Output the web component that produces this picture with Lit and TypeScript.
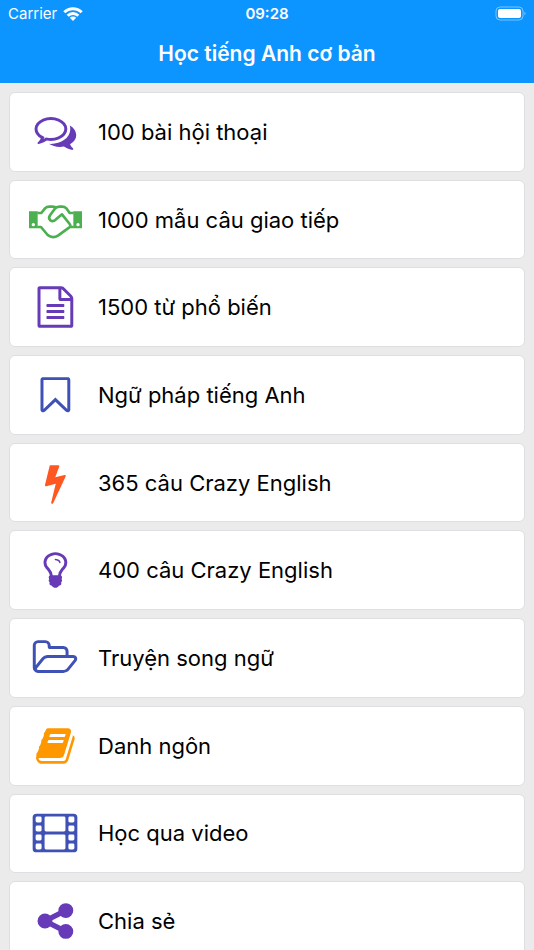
import { LitElement, html, svg, css } from "lit";
import type { SVGTemplateResult } from "lit";
import { customElement, property } from "lit/decorators.js";
import { classMap } from "lit/directives/class-map.js";

interface Icon {
  box: string;
  art: SVGTemplateResult;
}

interface Lesson {
  label: string;
  tone: string;
  icon: Icon;
}

const GLYPH_BOX = "-410 -393 2578 2578";
const WIDE_BOX = "-271 -393 2578 2578";

const glyph = (d: string, box = GLYPH_BOX): Icon => ({
  box,
  art: svg`<path fill="currentColor" d=${d}></path>`,
});

const comments = glyph(
  "M704 384q-153 0-286 52t-211.5 141-78.5 191q0 82 53 158t149 132l97 56-35 84q34-20 62-39l44-31 53 10q78 14 153 14 153 0 286-52t211.5-141 78.5-191-78.5-191-211.5-141-286-52zm0-128q191 0 353.5 68.5t256.5 186.5 94 257-94 257-256.5 186.5-353.5 68.5q-86 0-176-16-124 88-278 128-36 9-86 16h-3q-11 0-20.5-8t-11.5-21q-1-3-1-6.5t.5-6.5 2-6l2.5-5 3.5-5.5 4-5 4.5-5 4-4.5q5-6 23-25t26-29.5 22.5-29 25-38.5 20.5-44q-124-72-195-177t-71-224q0-139 94-257t256.5-186.5 353.5-68.5zm822 1169q10 24 20.5 44t25 38.5 22.5 29 26 29.5 23 25q1 1 4 4.5t4.5 5 4 5 3.5 5.5l2.5 5 2 6 .5 6.5-1 6.5q-3 14-13 22t-22 7q-50-7-86-16-154-40-278-128-90 16-176 16-271 0-472-132 58 4 88 4 161 0 309-45t264-129q125-92 192-212t67-254q0-77-23-152 129 71 204 178t75 230q0 120-71 224.5t-195 176.5z",
);

const handshake: Icon = {
  box: "15 -3 180 180",
  art: svg`
    <path fill="currentColor" fill-rule="evenodd" d="M27 61H53V112H27ZM40 96A5 5 0 1 0 40 106A5 5 0 1 0 40 96ZM160 61H186V112H160ZM174 96A5 5 0 1 0 174 106A5 5 0 1 0 174 96Z"></path>
    <path fill="none" stroke="currentColor" stroke-width="8" stroke-linejoin="round" d="M52 66H64L75 52Q80 47 88 47H98Q105 47 109 51M161 66H149L139 52Q134 47 126 47H118Q109 47 104 54L90 73Q84 82 91 88Q99 94 108 85L126 70L149 99Q154 105 147 110L115 133Q98 144 83 132L63 108H52M148 108H161"></path>`,
};

const fileText = glyph(
  "M1596 380q28 28 48 76t20 88v1152q0 40-28 68t-68 28h-1344q-40 0-68-28t-28-68v-1600q0-40 28-68t68-28h896q40 0 88 20t76 48zm-444-244v376h376q-10-29-22-41l-313-313q-12-12-41-22zm384 1528v-1024h-416q-40 0-68-28t-28-68v-416h-768v1536h1280zm-1024-864q0-14 9-23t23-9h704q14 0 23 9t9 23v64q0 14-9 23t-23 9h-704q-14 0-23-9t-9-23v-64zm736 224q14 0 23 9t9 23v64q0 14-9 23t-23 9h-704q-14 0-23-9t-9-23v-64q0-14 9-23t23-9h704zm0 256q14 0 23 9t9 23v64q0 14-9 23t-23 9h-704q-14 0-23-9t-9-23v-64q0-14 9-23t23-9h704z",
);

const bookmark = glyph(
  "M1408 256h-1024v1242l423-406 89-85 89 85 423 406v-1242zm12-128q23 0 44 9 33 13 52.5 41t19.5 62v1289q0 34-19.5 62t-52.5 41q-19 8-44 8-48 0-83-32l-441-424-441 424q-36 33-83 33-23 0-44-9-33-13-52.5-41t-19.5-62v-1289q0-34 19.5-62t52.5-41q21-9 44-9h1048z",
);

const bolt = glyph(
  "M1333 566q18 20 7 44l-540 1157q-13 25-42 25-4 0-14-2-17-5-25.5-19t-4.5-30l197-808-406 101q-4 1-12 1-18 0-31-11-18-15-13-39l201-825q4-14 16-23t28-9h328q19 0 32 12.5t13 29.5q0 8-5 18l-171 463 396-98q8-2 12-2 19 0 34 15z",
);

const bulb = glyph(
  "M1120 576q0 13-9.5 22.5t-22.5 9.5-22.5-9.5-9.5-22.5q0-46-54-71t-106-25q-13 0-22.5-9.5t-9.5-22.5 9.5-22.5 22.5-9.5q50 0 99.5 16t87 54 37.5 90zm160 0q0-72-34.5-134t-90-101.5-123-62-136.5-22.5-136.5 22.5-123 62-90 101.5-34.5 134q0 101 68 180 10 11 30.5 33t30.5 33q128 153 141 298h228q13-145 141-298 10-11 30.5-33t30.5-33q68-79 68-180zm128 0q0 155-103 268-45 49-74.5 87t-59.5 95.5-34 107.5q47 28 47 82 0 37-25 64 25 27 25 64 0 52-45 81 13 23 13 47 0 46-31.5 71t-77.5 25q-20 44-60 70t-87 26-87-26-60-70q-46 0-77.5-25t-31.5-71q0-24 13-47-45-29-45-81 0-37 25-64-25-27-25-64 0-54 47-82-4-50-34-107.5t-59.5-95.5-74.5-87q-103-113-103-268 0-99 44.5-184.5t117-142 164-89 186.5-32.5 186.5 32.5 164 89 117 142 44.5 184.5z",
);

const folder = glyph(
  "M1845 931q0-35-53-35h-1088q-40 0-85.5 21.5t-71.5 52.5l-294 363q-18 24-18 40 0 35 53 35h1088q40 0 86-22t71-53l294-363q18-22 18-39zm-1141-163h768v-160q0-40-28-68t-68-28h-576q-40 0-68-28t-28-68v-64q0-40-28-68t-68-28h-320q-40 0-68 28t-28 68v853l256-315q44-53 116-87.5t140-34.5zm1269 163q0 62-46 120l-295 363q-43 53-116 87.5t-140 34.5h-1088q-92 0-158-66t-66-158v-960q0-92 66-158t158-66h320q92 0 158 66t66 158v32h544q92 0 158 66t66 158v160h192q54 0 99 24.5t67 70.5q15 32 15 68z",
  WIDE_BOX,
);

const book = glyph(
  "M1703 478q40 57 18 129l-275 906q-19 64-76.5 107.5t-122.5 43.5h-923q-77 0-148.5-53.5t-99.5-131.5q-24-67-2-127 0-4 3-27t4-37q1-8-3-21.5t-3-19.5q2-11 8-21t16.5-23.5 16.5-23.5q23-38 45-91.5t30-91.5q3-10 .5-30t-.5-28q3-11 17-28t17-23q21-36 42-92t25-90q1-9-2.5-32t.5-28q4-13 22-30.5t22-22.5q19-26 42.5-84.5t27.5-96.5q1-8-3-25.5t-2-26.5q2-8 9-18t18-23 17-21q8-12 16.5-30.5t15-35 16-36 19.5-32 26.5-23.5 36-11.5 47.5 5.5l-1 3q38-9 51-9h761q74 0 114 56t18 130l-274 906q-36 119-71.5 153.5t-128.5 34.5h-869q-27 0-38 15-11 16-1 43 24 70 144 70h923q29 0 56-15.5t35-41.5l300-987q7-22 5-57 38 15 59 43zm-1064 2q-4 13 2 22.5t20 9.5h608q13 0 25.5-9.5t16.5-22.5l21-64q4-13-2-22.5t-20-9.5h-608q-13 0-25.5 9.5t-16.5 22.5zm-83 256q-4 13 2 22.5t20 9.5h608q13 0 25.5-9.5t16.5-22.5l21-64q4-13-2-22.5t-20-9.5h-608q-13 0-25.5 9.5t-16.5 22.5z",
);

const film: Icon = {
  box: WIDE_BOX,
  art: svg`
    <rect x="58" y="64" width="1920" height="1664" rx="160" fill="currentColor"></rect>
    ${[192, 576, 960, 1344].map(
      (y) => svg`
        <rect x="186" y=${y} width="256" height="256" rx="64" fill="#fff"></rect>
        <rect x="1594" y=${y} width="256" height="256" rx="64" fill="#fff"></rect>`,
    )}
    <rect x="570" y="192" width="896" height="640" rx="64" fill="#fff"></rect>
    <rect x="570" y="960" width="896" height="640" rx="64" fill="#fff"></rect>`,
};

const share = glyph(
  "M1344 1024q133 0 226.5 93.5t93.5 226.5-93.5 226.5-226.5 93.5-226.5-93.5-93.5-226.5q0-12 2-34l-360-180q-92 86-218 86-133 0-226.5-93.5t-93.5-226.5 93.5-226.5 226.5-93.5q126 0 218 86l360-180q-2-22-2-34 0-133 93.5-226.5t226.5-93.5 226.5 93.5 93.5 226.5-93.5 226.5-226.5 93.5q-126 0-218-86l-360 180q2 22 2 34t-2 34l360 180q92-86 218-86z",
);

const LESSONS: Lesson[] = [
  { label: "100 bài hội thoại", tone: "purple", icon: comments },
  { label: "1000 mẫu câu giao tiếp", tone: "green", icon: handshake },
  { label: "1500 từ phổ biến", tone: "purple", icon: fileText },
  { label: "Ngữ pháp tiếng Anh", tone: "indigo", icon: bookmark },
  { label: "365 câu Crazy English", tone: "red", icon: bolt },
  { label: "400 câu Crazy English", tone: "purple", icon: bulb },
  { label: "Truyện song ngữ", tone: "indigo", icon: folder },
  { label: "Danh ngôn", tone: "orange", icon: book },
  { label: "Học qua video", tone: "indigo", icon: film },
  { label: "Chia sẻ", tone: "purple", icon: share },
];

@customElement("status-bar")
export class StatusBar extends LitElement {
  static styles = css`
    :host {
      display: grid;
      grid-template-columns: 1fr auto 1fr;
      align-items: center;
      height: 28px;
      padding: 0 8px;
      font-size: 15px;
      line-height: 20px;
    }
    .carrier {
      display: flex;
      align-items: center;
      gap: 6px;
    }
    .time {
      font-weight: 600;
    }
    .battery {
      justify-self: end;
    }
    svg {
      display: block;
    }
  `;

  render() {
    return html`
      <span class="carrier">
        Carrier
        <svg width="20" height="16" viewBox="0 0 20 16" aria-hidden="true">
          <g fill="none" stroke="#fff" stroke-width="3">
            <path d="M1.3 6.2A12.4 12.4 0 0 1 18.7 6.2"></path>
            <path d="M4.7 9.7A7.5 7.5 0 0 1 15.3 9.7"></path>
          </g>
          <path fill="#fff" d="M10 15L6.8 11.8A4.5 4.5 0 0 1 13.2 11.8Z"></path>
        </svg>
      </span>
      <span class="time">09:28</span>
      <svg class="battery" width="31" height="16" viewBox="0 0 31 16" aria-hidden="true">
        <rect x="1" y="1" width="27" height="13" rx="4" fill="none" stroke="#fff" stroke-opacity=".45"></rect>
        <rect x="3" y="3" width="23" height="9" rx="2" fill="#fff"></rect>
        <path d="M29.500 5.500Q31.500 7.500 29.500 9.500Z" fill="#fff" fill-opacity=".5"></path>
      </svg>
    `;
  }
}

@customElement("lesson-card")
export class LessonCard extends LitElement {
  @property({ attribute: false }) lesson!: Lesson;

  static styles = css`
    :host {
      display: grid;
    }
    .card {
      display: flex;
      align-items: center;
      gap: 13px;
      padding: 8px 15px;
      border: 1px solid #dedfe3;
      border-radius: 6px;
      background: #fff;
      color: #000;
      font-size: 22px;
      line-height: 28px;
      text-decoration: none;
    }
    .icon {
      flex: none;
      width: 60px;
      height: 60px;
    }
    .purple { color: #673ab7; }
    .green { color: #4caf50; }
    .indigo { color: #3f51b5; }
    .red { color: #ff5722; }
    .orange { color: #ff9800; }
  `;

  render() {
    const { label, tone, icon } = this.lesson;
    return html`
      <a class="card" href="#">
        <svg class=${classMap({ icon: true, [tone]: true })} viewBox=${icon.box} aria-hidden="true">
          ${icon.art}
        </svg>
        <span>${label}</span>
      </a>
    `;
  }
}

@customElement("app-root")
export class AppRoot extends LitElement {
  static styles = css`
    :host {
      display: flex;
      flex-direction: column;
      height: 100vh;
      background: #ebebeb;
      font-family: Inter, "Noto Sans", sans-serif;
    }
    .header {
      flex: none;
      background: #0c94ff;
      color: #fff;
    }
    .title {
      margin: 0;
      padding: 12px 16px 15px;
      font-size: 21px;
      font-weight: 600;
      line-height: 28px;
      text-align: center;
    }
    .content {
      flex: 1;
      min-height: 0;
      overflow-y: auto;
      scrollbar-width: none;
    }
    .list {
      display: grid;
      grid-auto-rows: 1fr;
      gap: 8px;
      min-height: 869px;
      margin: 0;
      padding: 9px;
      list-style: none;
    }
    .item {
      display: grid;
    }
  `;

  render() {
    return html`
      <header class="header">
        <status-bar></status-bar>
        <h1 class="title">Học tiếng Anh cơ bản</h1>
      </header>
      <main class="content">
        <ul class="list">
          ${LESSONS.map(
            (lesson) => html`<li class="item"><lesson-card .lesson=${lesson}></lesson-card></li>`,
          )}
        </ul>
      </main>
    `;
  }
}
